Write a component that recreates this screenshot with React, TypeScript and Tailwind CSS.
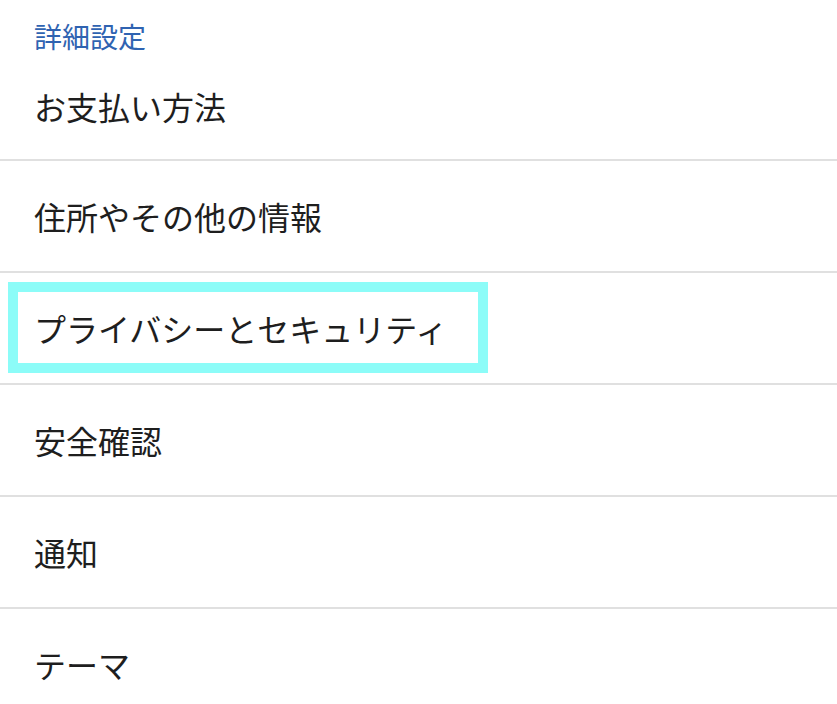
import React from "react";

const items = [
    "お支払い方法",
    "住所やその他の情報",
    "プライバシーとセキュリティ",
    "安全確認",
    "通知",
    "テーマ",
];

function App() {
    return (
        <div
            className="w-[837px] h-[704px] overflow-hidden bg-white text-[#1e1e1e]"
            style={{ fontFamily: '"Noto Sans CJK JP", "Noto Sans", sans-serif' }}
        >
            <div className="pt-[21px] pl-[34px] text-[28px] leading-[31px] text-[#2f63b1]">
                詳細設定
            </div>
            {items.map((item, index) => (
                <div
                    key={index}
                    className={`relative flex items-center pl-[34px] border-b-2 border-[#e0e0e0] text-[32px] leading-none ${
                        index === 0 ? "h-[109px]" : "h-[112px]"
                    }`}
                >
                    {index === 2 && (
                        <div className="absolute left-[8px] top-[9px] w-[480px] h-[91px] border-[10px] border-[#8cfcf8]" />
                    )}
                    <span className="relative">{item}</span>
                </div>
            ))}
        </div>
    );
}

export default App;
